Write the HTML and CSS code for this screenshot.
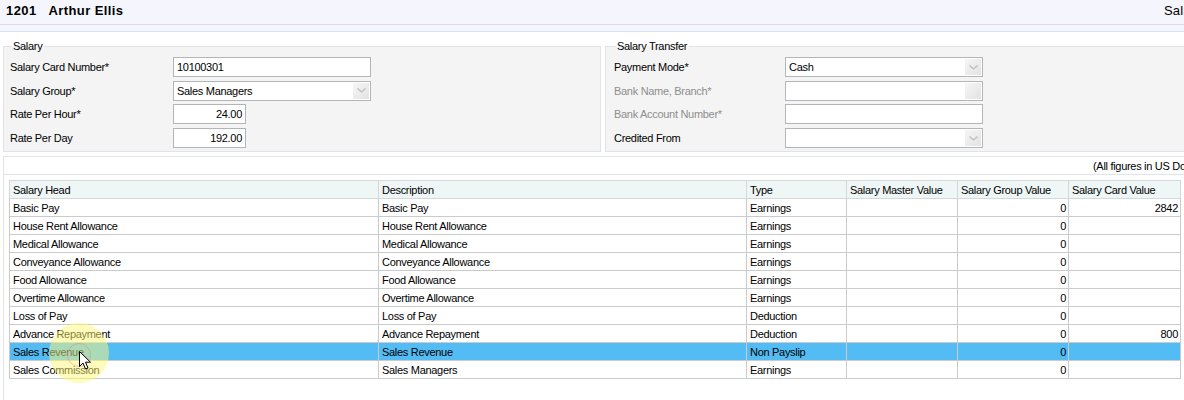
FILE: index.html
```html
<!DOCTYPE html>
<html>
<head>
<meta charset="utf-8">
<link rel="stylesheet" href="styles.css">
</head>
<body>
<div class="app">
  <header class="topbar">
    <div class="title">1201&nbsp;&nbsp;&nbsp;Arthur Ellis</div>
    <div class="screen-name">Salary Card</div>
  </header>
  <div class="subbar"></div>
  <div class="gap-band"></div>

  <div class="forms">
    <fieldset class="group group-salary">
      <legend>Salary</legend>
      <div class="form-grid">
        <label>Salary Card Number*</label>
        <div class="input wide">10100301</div>
        <label>Salary Group*</label>
        <div class="input wide select"><span>Sales Managers</span><span class="drop"><svg width="9" height="5" viewBox="0 0 9 5"><polyline points="0.5,0.5 4.5,4 8.5,0.5" fill="none" stroke="#b9bdc2" stroke-width="1.2"/></svg></span></div>
        <label>Rate Per Hour*</label>
        <div class="input short num">24.00</div>
        <label>Rate Per Day</label>
        <div class="input short num">192.00</div>
      </div>
    </fieldset>
    <fieldset class="group group-transfer">
      <legend>Salary Transfer</legend>
      <div class="form-grid transfer">
        <label>Payment Mode*</label>
        <div class="input wide select"><span>Cash</span><span class="drop"><svg width="9" height="5" viewBox="0 0 9 5"><polyline points="0.5,0.5 4.5,4 8.5,0.5" fill="none" stroke="#b9bdc2" stroke-width="1.2"/></svg></span></div>
        <label class="disabled">Bank Name, Branch*</label>
        <div class="input wide select"><span></span><span class="drop"></span></div>
        <label class="disabled">Bank Account Number*</label>
        <div class="input wide"></div>
        <label>Credited From</label>
        <div class="input wide select"><span></span><span class="drop"><svg width="9" height="5" viewBox="0 0 9 5"><polyline points="0.5,0.5 4.5,4 8.5,0.5" fill="none" stroke="#b9bdc2" stroke-width="1.2"/></svg></span></div>
      </div>
    </fieldset>
  </div>

  <section class="panel">
    <div class="note">(All figures in US Dollars)</div>
    <table class="grid">
      <colgroup>
        <col style="width:369px"><col style="width:368px"><col style="width:100px"><col style="width:111px"><col style="width:111px"><col style="width:112px">
      </colgroup>
      <thead>
        <tr><th>Salary Head</th><th>Description</th><th>Type</th><th>Salary Master Value</th><th>Salary Group Value</th><th>Salary Card Value</th></tr>
      </thead>
      <tbody>
        <tr><td>Basic Pay</td><td>Basic Pay</td><td>Earnings</td><td></td><td class="num">0</td><td class="num">2842</td></tr>
        <tr><td>House Rent Allowance</td><td>House Rent Allowance</td><td>Earnings</td><td></td><td class="num">0</td><td></td></tr>
        <tr><td>Medical Allowance</td><td>Medical Allowance</td><td>Earnings</td><td></td><td class="num">0</td><td></td></tr>
        <tr><td>Conveyance Allowance</td><td>Conveyance Allowance</td><td>Earnings</td><td></td><td class="num">0</td><td></td></tr>
        <tr><td>Food Allowance</td><td>Food Allowance</td><td>Earnings</td><td></td><td class="num">0</td><td></td></tr>
        <tr><td>Overtime Allowance</td><td>Overtime Allowance</td><td>Earnings</td><td></td><td class="num">0</td><td></td></tr>
        <tr><td>Loss of Pay</td><td>Loss of Pay</td><td>Deduction</td><td></td><td class="num">0</td><td></td></tr>
        <tr><td>Advance Repayment</td><td>Advance Repayment</td><td>Deduction</td><td></td><td class="num">0</td><td class="num">800</td></tr>
        <tr class="selected"><td>Sales Revenue</td><td>Sales Revenue</td><td>Non Payslip</td><td></td><td class="num">0</td><td></td></tr>
        <tr><td>Sales Commission</td><td>Sales Managers</td><td>Earnings</td><td></td><td class="num">0</td><td></td></tr>
      </tbody>
    </table>
  </section>

  <div class="click-halo"></div>
  <div class="click-ring"></div>
  <svg class="cursor" width="13" height="20" viewBox="0 0 13 20"><path d="M0.5,0.5 L0.5,15.5 L4,12 L6.5,18 L9,17 L6.5,11.2 L11.5,11.2 Z" fill="#fff" stroke="#000" stroke-width="1"/></svg>
</div>
</body>
</html>
```

FILE: styles.css
```css
html, body {
  margin: 0;
  padding: 0;
  overflow: hidden;
  background: #ffffff;
}
body {
  font-family: "Liberation Sans", Arial, sans-serif;
  font-size: 11px;
  letter-spacing: -0.3px;
  color: #000;
}
.app {
  position: relative;
  width: 1232px;
  height: 400px;
  overflow: hidden;
}
.topbar {
  height: 25px;
  box-sizing: border-box;
  background: #f5f6fd;
  border-bottom: 1px solid #dcdde3;
  display: flex;
  align-items: flex-start;
  padding: 2px 6px 0 6px;
  line-height: 17px;
}
.title {
  width: 1158px;
  flex-shrink: 0;
  font-size: 13px;
  font-weight: bold;
  letter-spacing: 0.4px;
}
.screen-name {
  font-size: 13px;
  letter-spacing: 0.2px;
  white-space: nowrap;
}
.subbar {
  height: 7px;
  box-sizing: border-box;
  background: #f5f6fd;
  border-bottom: 1px solid #d6e2ee;
}
.gap-band {
  height: 8px;
}
.forms {
  display: flex;
  gap: 4px;
  padding: 0 0 0 3px;
}
.group {
  margin: 0;
  border: 1px solid #e2e3e6;
  background: #f4f4f4;
  padding: 4px 6px 3px 6px;
  min-width: 0;
}
.group legend {
  padding: 0 2px 0 1px;
  margin-left: 2px;
  font-size: 11px;
  line-height: 13px;
  background: linear-gradient(#fff 0 50%, #f4f4f4 50%);
}
.group-salary {
  width: 584px;
}
.group-transfer {
  flex: 1;
  padding-left: 8px;
}
.form-grid {
  display: grid;
  grid-template-columns: 163px auto;
  grid-auto-rows: 20px;
  row-gap: 3.7px;
  align-items: center;
  justify-items: start;
}
.form-grid.transfer {
  grid-template-columns: 171px auto;
}
.form-grid label {
  white-space: nowrap;
}
.form-grid label.disabled {
  color: #8e8e8e;
}
.input {
  box-sizing: border-box;
  height: 20px;
  border: 1px solid #b3b5b8;
  background: #fff;
  padding: 0 3px;
  line-height: 18px;
  display: flex;
  align-items: center;
}
.input.wide { width: 198px; }
.input.short { width: 73px; }
.input.num { justify-content: flex-end; }
.input.select {
  justify-content: space-between;
  padding-right: 1px;
}
.drop {
  width: 16px;
  height: 16px;
  background: linear-gradient(135deg, #f6f6f6, #e2e2e2);
  display: flex;
  align-items: center;
  justify-content: center;
}
.panel {
  margin: 4px 0 0 3px;
  border: 1px solid #dfe5ea;
  border-right: none;
  height: 260px;
  box-sizing: border-box;
  background: #fff;
}
.note {
  height: 18px;
  box-sizing: border-box;
  border-bottom: 1px solid #dfe5ea;
  line-height: 18px;
  padding-left: 1089px;
  white-space: nowrap;
  margin-bottom: 5px;
}
.grid {
  margin-left: 5px;
  border-collapse: collapse;
  table-layout: fixed;
  width: 1171px;
  border-top: 1px solid #a0a0a0;
  border-left: 1px solid #a0a0a0;
}
.grid th, .grid td {
  height: 17px;
  padding: 0 2px 0 3px;
  border: 1px solid #cbcbcb;
  font-weight: normal;
  text-align: left;
  white-space: nowrap;
  overflow: hidden;
  line-height: 16px;
}
.grid th {
  background: #eef6f6;
  border-color: #d4d8d8;
}
.grid td.num {
  text-align: right;
}
.grid tr.selected td {
  background: #54bcf5;
}
.click-halo {
  position: absolute;
  left: 49px;
  top: 323px;
  width: 60px;
  height: 60px;
  border-radius: 50%;
  background: rgba(255, 248, 120, 0.5);
}
.click-ring {
  position: absolute;
  left: 67px;
  top: 343px;
  width: 24px;
  height: 24px;
  border-radius: 50%;
  border: 1px solid rgba(230, 120, 120, 0.45);
  box-sizing: border-box;
}
.cursor {
  position: absolute;
  left: 79px;
  top: 351px;
}
```
